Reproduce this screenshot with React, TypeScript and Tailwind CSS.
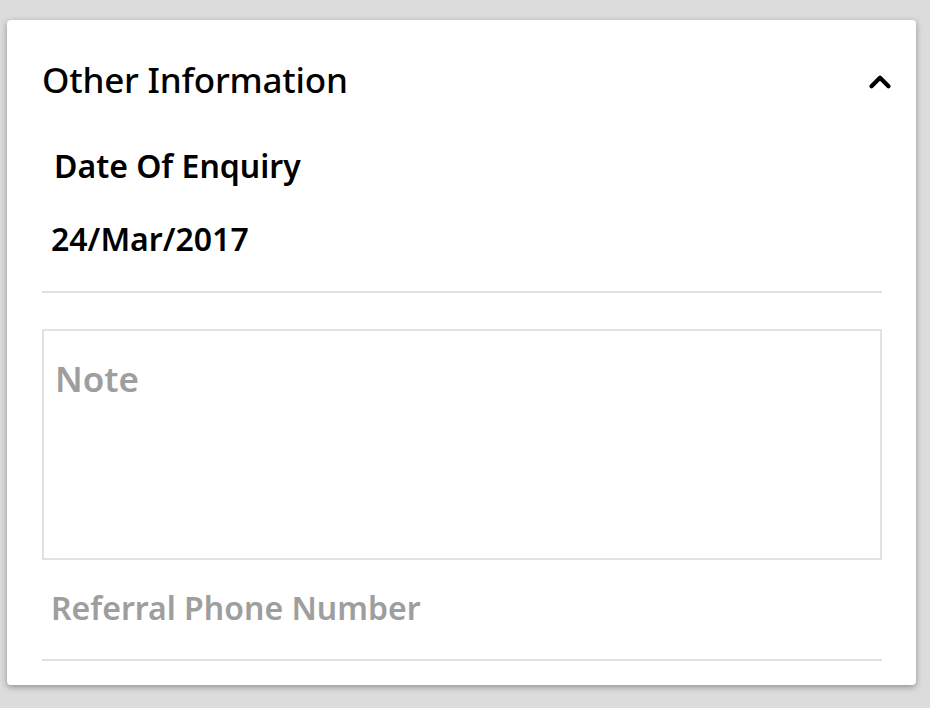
import React from 'react';
import { ChevronUp } from 'lucide-react';

const App: React.FC = () => {
  return (
    <div className="min-h-screen w-full bg-[#dcdcdc] pt-[20px] pl-[7px] pr-[14px] font-['Noto_Sans',sans-serif]">
      <div className="h-[665px] w-[909px] rounded-[4px] bg-white shadow-[0_2px_6px_rgba(0,0,0,0.35)] px-[35px] pt-[37px]">
        {/* header */}
        <div className="flex items-center justify-between">
          <h2 className="text-[35px] leading-[46px] font-medium text-black tracking-[-0.2px]">Other Information</h2>
          <ChevronUp size={34} strokeWidth={3} className="text-black mr-[-16px] mt-[3px]" />
        </div>

        <div className="mt-[43px] pl-[12px] text-[32px] leading-[40px] font-semibold text-black">Date Of Enquiry</div>
        <div className="mt-[33px] pl-[9px] text-[32px] leading-[40px] font-semibold text-black">24/Mar/2017</div>

        <div className="mt-[32px] h-[2px] w-[840px] bg-[#e2e2e2]" />

        <div className="mt-[36px] h-[231px] w-[840px] border-2 border-[#e2e2e2] px-[11px] pt-[26px]">
          <div className="text-[35px] leading-[44px] font-semibold text-[#9e9e9e]">Note</div>
        </div>

        <div className="mt-[26px] pl-[9px] text-[32px] leading-[44px] font-semibold text-[#9e9e9e]">Referral Phone Number</div>

        <div className="mt-[29px] h-[2px] w-[840px] bg-[#e2e2e2]" />
      </div>
    </div>
  );
};

export default App;
